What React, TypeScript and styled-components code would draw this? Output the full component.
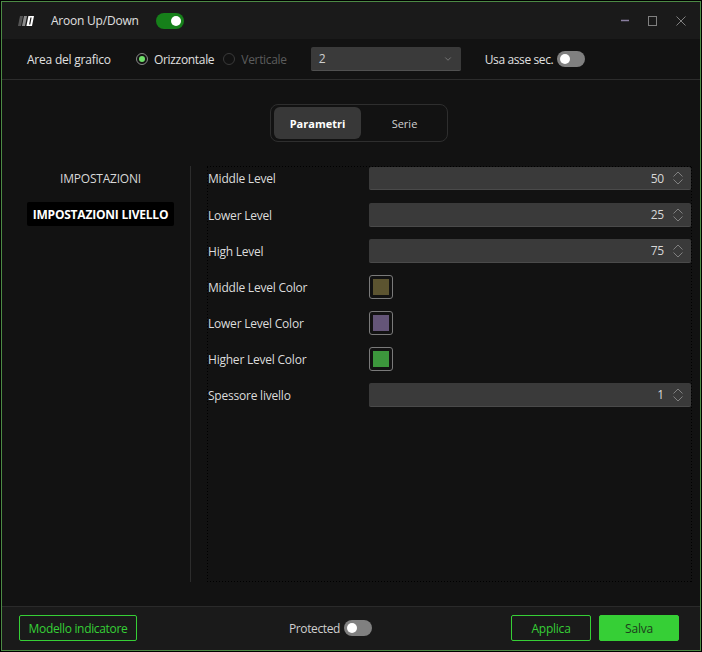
import React from "react";
import styled, { createGlobalStyle } from "styled-components";
import { ChevronDown } from "lucide-react";

const Global = createGlobalStyle`
  html, body { margin: 0; padding: 0; background: #000; }
  * { box-sizing: border-box; }
  #root { width: 702px; height: 652px; padding: 1px; }
`;

const Win = styled.div`
  width: 700px;
  height: 650px;
  border: 1px solid #4c8a45;
  background: #121212;
  color: #e0e0e0;
  font-family: "Open Sans", "Noto Sans", sans-serif;
  font-size: 12px;
  letter-spacing: -0.22px;
  display: flex;
  flex-direction: column;
`;

const TitleBar = styled.header`
  height: 37px;
  flex: none;
  background: #1a1a1a;
  display: flex;
  align-items: center;
  padding: 0 14px 0 16px;
`;

const Logo = styled.svg`
  width: 16px;
  height: 10px;
  margin-right: 17px;
`;

const TitleText = styled.span`
  margin-right: 17px;
`;

const Toggle = styled.span<{ $on?: boolean }>`
  width: 28px;
  height: 16px;
  flex: none;
  border-radius: 8px;
  background: ${(p) => (p.$on ? "#16801a" : "#808080")};
  display: flex;
  align-items: center;
  justify-content: ${(p) => (p.$on ? "flex-end" : "flex-start")};
  padding: 0 3px;
  &::after {
    content: "";
    width: 10px;
    height: 10px;
    border-radius: 50%;
    background: #fff;
  }
`;

const WinButtons = styled.div`
  margin-left: auto;
  display: flex;
  align-items: center;
  gap: 19px;
  svg { display: block; }
`;

const Toolbar = styled.div`
  height: 41px;
  flex: none;
  display: flex;
  align-items: center;
  padding: 0 0 0 25px;
  border-bottom: 1px solid #2c2c2c;
`;

const ToolLabel = styled.span`
  width: 109px;
`;

const Radio = styled.label<{ $off?: boolean }>`
  display: flex;
  align-items: center;
  gap: 6px;
  margin-right: 9px;
  letter-spacing: -0.32px;
  color: ${(p) => (p.$off ? "#5c5c5c" : "#e0e0e0")};
`;

const RadioDot = styled.span<{ $on?: boolean }>`
  width: 12px;
  height: 12px;
  border-radius: 50%;
  border: 1px solid ${(p) => (p.$on ? "#8a8a8a" : "#3a3a3a")};
  display: flex;
  align-items: center;
  justify-content: center;
  &::after {
    content: "";
    width: 6px;
    height: 6px;
    border-radius: 50%;
    background: ${(p) => (p.$on ? "#6fe06a" : "transparent")};
  }
`;

const Select = styled.div`
  width: 150px;
  height: 24px;
  margin-left: 15px;
  margin-right: 24px;
  border-radius: 2px;
  background: #3a3a3a;
  border-bottom: 1px solid #505050;
  display: flex;
  align-items: center;
  justify-content: space-between;
  padding: 0 8px;
  color: #cfcfcf;
`;

const AxisLabel = styled.span`
  margin-right: 4px;
  letter-spacing: -0.38px;
`;

const Content = styled.main`
  flex: 1;
  min-height: 0;
  display: flex;
  flex-direction: column;
`;

const TabsRow = styled.div`
  display: flex;
  justify-content: center;
  padding: 24px 0 0 16px;
  margin-bottom: 24px;
`;

const Tabs = styled.div`
  width: 178px;
  height: 38px;
  border: 1px solid #2e2e2e;
  border-radius: 8px;
  padding: 2px 0 2px 3px;
  display: flex;
`;

const Tab = styled.div<{ $active?: boolean }>`
  width: 87px;
  flex: none;
  border-radius: 6px;
  display: flex;
  align-items: center;
  justify-content: center;
  font-size: 11px;
  letter-spacing: 0;
  font-weight: ${(p) => (p.$active ? 700 : 400)};
  color: ${(p) => (p.$active ? "#fff" : "#d0d0d0")};
  background: ${(p) => (p.$active ? "#383838" : "transparent")};
`;

const Body = styled.div`
  display: flex;
  height: 416px;
  padding-left: 25px;
`;

const Side = styled.nav`
  width: 164px;
  flex: none;
  border-right: 1px solid #2c2c2c;
  margin-right: 16px;
`;

const SideItem = styled.div<{ $active?: boolean }>`
  width: 147px;
  height: 24px;
  margin-bottom: ${(p) => (p.$active ? 0 : "12px")};
  border-radius: 2px;
  display: flex;
  align-items: center;
  justify-content: center;
  font-weight: ${(p) => (p.$active ? 700 : 400)};
  color: ${(p) => (p.$active ? "#fff" : "#d8d8d8")};
  background: ${(p) => (p.$active ? "#000" : "transparent")};
`;

/* sparse black dots: css dotted can't do 1 on / 2 off */
const Panel = styled.section`
  width: 485px;
  padding: 1px;
  display: flex;
  flex-direction: column;
  gap: 12px;
  background-image:
    repeating-linear-gradient(90deg, #000 0 1px, transparent 1px 3px),
    repeating-linear-gradient(90deg, #000 0 1px, transparent 1px 3px),
    repeating-linear-gradient(0deg, #000 0 1px, transparent 1px 3px),
    repeating-linear-gradient(0deg, #000 0 1px, transparent 1px 3px);
  background-size: 100% 1px, 100% 1px, 1px 100%, 1px 100%;
  background-position: top, bottom, left, right;
  background-repeat: no-repeat;
`;

const Row = styled.div`
  display: flex;
  align-items: center;
  height: 24px;
  &:first-child {
    height: 23px;
    margin-bottom: 1px;
  }
`;

const RowLabel = styled.span`
  width: 161px;
  color: #dcdcdc;
`;

const NumberBox = styled.div`
  flex: 1;
  height: 100%;
  border-radius: 2px;
  background: #3a3a3a;
  border-bottom: 1px solid #4a4a4a;
  display: flex;
  align-items: center;
  justify-content: flex-end;
  gap: 9px;
  padding-right: 8px;
  color: #d8d8d8;
`;

const Spinner = styled.svg`
  width: 10px;
  height: 14px;
  fill: none;
  stroke: #808080;
  stroke-width: 1;
`;

const Swatch = styled.div<{ $color: string }>`
  width: 24px;
  height: 24px;
  border: 1px solid #7a7a7a;
  border-radius: 3px;
  padding: 3px;
  &::after {
    content: "";
    display: block;
    width: 100%;
    height: 100%;
    background: ${(p) => p.$color};
  }
`;

const Footer = styled.footer`
  height: 44px;
  flex: none;
  margin-top: auto;
  background: #1a1a1a;
  border-top: 1px solid #2a2a2a;
  display: flex;
  align-items: center;
  padding: 0 21px 1px 17px;
`;

const Protected = styled.div`
  margin-left: 152px;
  display: flex;
  align-items: center;
  gap: 4px;
  letter-spacing: -0.38px;
  color: #cfcfcf;
`;

const FooterRight = styled.div`
  margin-left: auto;
  display: flex;
  gap: 8px;
`;

const Button = styled.button<{ $primary?: boolean; $w: number; $tight?: boolean }>`
  width: ${(p) => p.$w}px;
  height: 26px;
  padding: 0;
  border: 1px solid #36cf36;
  border-radius: 2px;
  font: inherit;
  letter-spacing: ${(p) => (p.$tight ? "-0.33px" : "inherit")};
  color: ${(p) => (p.$primary ? "#1c3c1c" : "#36cf36")};
  background: ${(p) => (p.$primary ? "#36cf36" : "transparent")};
`;

const rows = [
  { label: "Middle Level", value: "50" },
  { label: "Lower Level", value: "25" },
  { label: "High Level", value: "75" },
  { label: "Middle Level Color", color: "#5c5430" },
  { label: "Lower Level Color", color: "#645578" },
  { label: "Higher Level Color", color: "#3c963c" },
  { label: "Spessore livello", value: "1" },
];

export default function App() {
  return (
    <>
      <Global />
      <Win>
        <TitleBar>
          <Logo viewBox="0 0 16 10">
            <path d="M2 0h3L3 10H0z" fill="#555" />
            <path d="M6 0h3L7 10H4z" fill="#8c8c8c" />
            <path d="M10.4 0h5.6l-2 10H8.4zM12.4 1.5l-1.3 7h1.2l1.3-7z" fill="#fff" fillRule="evenodd" />
          </Logo>
          <TitleText>Aroon Up/Down</TitleText>
          <Toggle $on />
          <WinButtons>
            <svg width="8" height="10" viewBox="0 0 8 10">
              <path d="M0 4.5h8" stroke="#8a7fa0" strokeWidth="1.5" />
            </svg>
            <svg width="9" height="10" viewBox="0 0 9 10">
              <rect x="0.5" y="0.5" width="8" height="9" fill="none" stroke="#808080" />
            </svg>
            <svg width="10" height="10" viewBox="0 0 10 10">
              <path d="M0.5 0.5l9 9M9.5 0.5l-9 9" fill="none" stroke="#808080" />
            </svg>
          </WinButtons>
        </TitleBar>
        <Toolbar>
          <ToolLabel>Area del grafico</ToolLabel>
          <Radio>
            <RadioDot $on />
            Orizzontale
          </Radio>
          <Radio $off>
            <RadioDot />
            Verticale
          </Radio>
          <Select>
            2
            <ChevronDown size={10} color="#808080" />
          </Select>
          <AxisLabel>Usa asse sec.</AxisLabel>
          <Toggle />
        </Toolbar>
        <Content>
          <TabsRow>
            <Tabs>
              <Tab $active>Parametri</Tab>
              <Tab>Serie</Tab>
            </Tabs>
          </TabsRow>
          <Body>
            <Side>
              <SideItem>IMPOSTAZIONI</SideItem>
              <SideItem $active>IMPOSTAZIONI LIVELLO</SideItem>
            </Side>
            <Panel>
              {rows.map((r) => (
                <Row key={r.label}>
                  <RowLabel>{r.label}</RowLabel>
                  {r.color ? (
                    <Swatch $color={r.color} />
                  ) : (
                    <NumberBox>
                      {r.value}
                      <Spinner viewBox="0 0 10 14">
                        <path d="M0.5 5.5L5 1l4.5 4.5M0.5 8.5L5 13l4.5-4.5" />
                      </Spinner>
                    </NumberBox>
                  )}
                </Row>
              ))}
            </Panel>
          </Body>
        </Content>
        <Footer>
          <Button $w={118} $tight>
            Modello indicatore
          </Button>
          <Protected>
            Protected
            <Toggle />
          </Protected>
          <FooterRight>
            <Button $w={80}>Applica</Button>
            <Button $w={80} $primary>
              Salva
            </Button>
          </FooterRight>
        </Footer>
      </Win>
    </>
  );
}
